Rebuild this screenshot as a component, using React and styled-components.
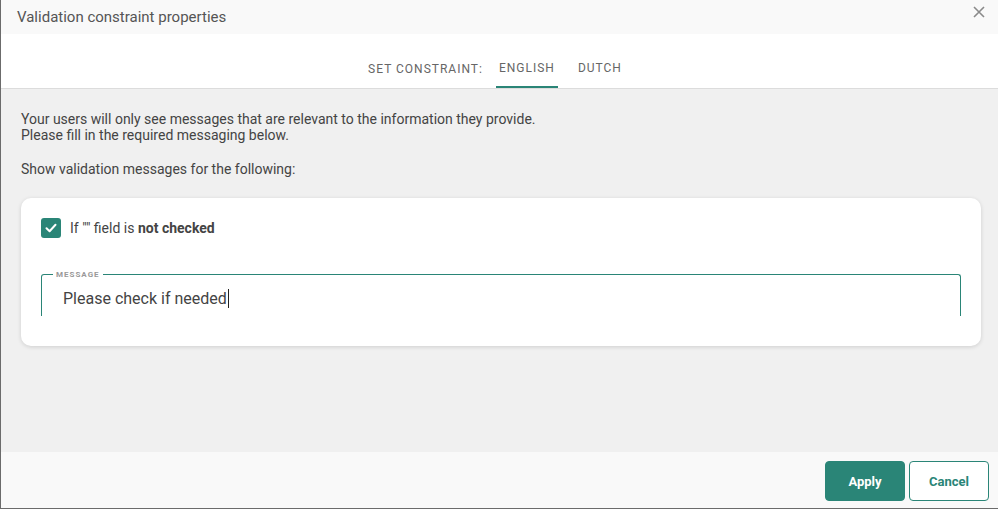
import styled, { createGlobalStyle } from "styled-components";

const teal = "#2a8577";

const Global = createGlobalStyle`
  html, body {
    margin: 0;
    padding: 0;
    background: #ffffff;
    font-family: Roboto, "Liberation Sans", sans-serif;
  }
  * { box-sizing: border-box; }
`;

const Dialog = styled.div`
  width: 998px;
  height: 509px;
  display: flex;
  flex-direction: column;
  border-left: 1px solid #6b6b6b;
  border-bottom: 1px solid #6b6b6b;
  background: #fff;
`;

const Header = styled.div`
  height: 34px;
  flex: none;
  display: flex;
  align-items: center;
  justify-content: space-between;
  padding: 0 13px 0 16px;
  background: #f9f9f9;
`;

const Title = styled.h1`
  margin: 0;
  font-size: 15px;
  font-weight: 400;
  color: #555;
`;

const Close = styled.button`
  align-self: flex-start;
  margin-top: 6px;
  border: none;
  background: none;
  padding: 0;
  display: flex;
  color: #8a8a8a;
  cursor: pointer;
`;

const TabBar = styled.div`
  height: 55px;
  flex: none;
  display: flex;
  justify-content: center;
  align-items: stretch;
  padding-right: 6px;
  border-bottom: 1px solid #dcdcdc;
  background: #fff;
`;

const TabLabel = styled.span`
  display: flex;
  align-items: center;
  padding-top: 16px;
  margin-right: 13px;
  font-size: 12px;
  letter-spacing: 1px;
  color: #666;
`;

const Tab = styled.span`
  display: flex;
  align-items: center;
  padding: 16px 3px 0;
  margin-right: ${(p) => (p.$last ? 0 : 17)}px;
  font-size: 12px;
  letter-spacing: 1px;
  color: #666;
  border-bottom: 2px solid ${(p) => (p.$active ? teal : "transparent")};
`;

const Body = styled.div`
  flex: 1;
  background: #f0f0f0;
  padding: 22px 17px 0 20px;
`;

const Text = styled.p`
  margin: 0 0 18px;
  font-size: 14px;
  line-height: 16px;
  color: #444;
`;

const Card = styled.div`
  margin-top: 21px;
  background: #fff;
  border-radius: 10px;
  box-shadow: 0 1px 4px rgba(0, 0, 0, 0.14);
  padding: 20px 20px 30px;
`;

const CheckRow = styled.label`
  display: flex;
  align-items: center;
  gap: 9px;
  font-size: 14px;
  color: #444;
`;

const Box = styled.span`
  width: 20px;
  height: 20px;
  border-radius: 3px;
  background: ${teal};
  display: flex;
  align-items: center;
  justify-content: center;
`;

const Field = styled.fieldset`
  margin: 32px 0 0;
  height: 46px;
  padding: 0;
  border: 1px solid ${teal};
  border-bottom: none;
  border-radius: 3px 3px 0 0;
`;

const Legend = styled.legend`
  margin-left: 11px;
  padding: 0 3px;
  font-size: 8px;
  font-weight: 700;
  letter-spacing: 1px;
  color: #999;
  text-transform: uppercase;
`;

const Value = styled.div`
  margin-top: 10px;
  padding-left: 21px;
  font-size: 16px;
  color: #444;
  display: flex;
  align-items: center;
`;

const Caret = styled.span`
  display: inline-block;
  width: 1px;
  height: 19px;
  background: #222;
  margin-left: 1px;
`;

const Footer = styled.div`
  height: 56px;
  flex: none;
  background: #f9f9f9;
  display: flex;
  justify-content: flex-end;
  align-items: center;
  gap: 4px;
  padding: 2px 9px 0 0;
`;

const Button = styled.button`
  width: 80px;
  height: 40px;
  border-radius: 4px;
  font-family: inherit;
  font-size: 13px;
  font-weight: 700;
  border: 1px solid ${teal};
  background: ${(p) => (p.$primary ? teal : "#fff")};
  color: ${(p) => (p.$primary ? "#fff" : teal)};
  cursor: pointer;
`;

export default function App() {
  return (
    <>
      <Global />
      <Dialog>
        <Header>
          <Title>Validation constraint properties</Title>
          <Close aria-label="close">
            <svg width="12" height="12" viewBox="0 0 12 12">
              <path d="M1 1 L11 11 M11 1 L1 11" stroke="currentColor" strokeWidth="1.6" />
            </svg>
          </Close>
        </Header>
        <TabBar>
          <TabLabel>SET CONSTRAINT:</TabLabel>
          <Tab $active>ENGLISH</Tab>
          <Tab $last>DUTCH</Tab>
        </TabBar>
        <Body>
          <Text>
            Your users will only see messages that are relevant to the information they provide.
            <br />
            Please fill in the required messaging below.
          </Text>
          <Text>Show validation messages for the following:</Text>
          <Card>
            <CheckRow>
              <Box>
                <svg width="14" height="14" viewBox="0 0 14 14">
                  <path d="M2.5 7.2 L5.6 10.2 L11.5 3.8" fill="none" stroke="#fff" strokeWidth="2" strokeLinecap="round" strokeLinejoin="round" />
                </svg>
              </Box>
              <span>
                If "" field is <b>not checked</b>
              </span>
            </CheckRow>
            <Field>
              <Legend>Message</Legend>
              <Value>
                Please check if needed
                <Caret />
              </Value>
            </Field>
          </Card>
        </Body>
        <Footer>
          <Button $primary>Apply</Button>
          <Button>Cancel</Button>
        </Footer>
      </Dialog>
    </>
  );
}
